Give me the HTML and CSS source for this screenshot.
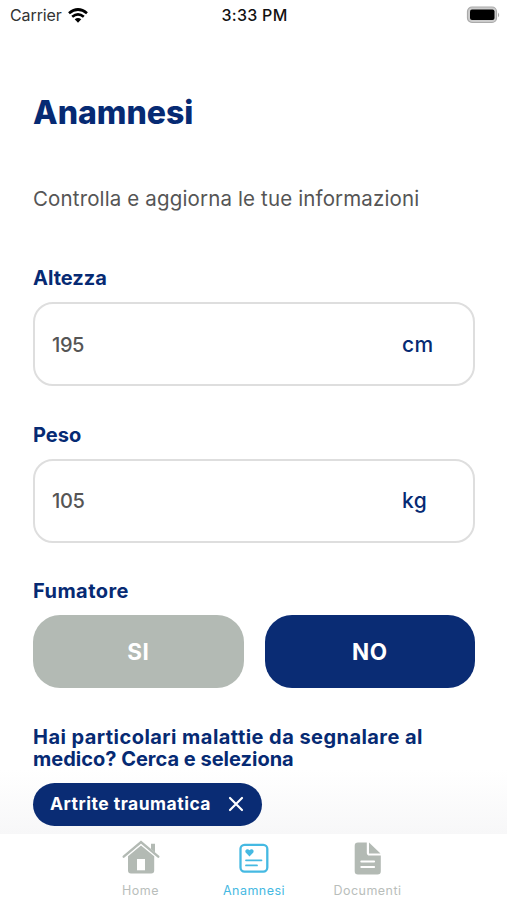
FILE: index.html
```html
<!DOCTYPE html>
<html lang="it">
<head>
<meta charset="utf-8">
<title>Anamnesi</title>
<link rel="stylesheet" href="styles.css">
</head>
<body>
<div class="screen">
  <header class="status">
    <div class="carrier"><span>Carrier</span>
      <svg width="20" height="15" viewBox="0 0 20 15" fill="none" stroke="#000" stroke-width="2.7"><path d="M1 5.2Q10-2.2 19 5.2M4.2 8.7q5.8-4.7 11.6 0"/><path d="M6.7 11.3q3.3-2.7 6.6 0L10 14.8z" fill="#000" stroke="none"/></svg>
    </div>
    <time class="clock">3:33 PM</time>
    <svg class="battery" width="34" height="18" viewBox="0 0 34 18"><rect x="1.5" y="1" width="29" height="15.5" rx="4.5" fill="#ccc" stroke="#aaa" stroke-width="1.2"/><rect x="4" y="3.6" width="24.5" height="10.4" rx="2"/><path d="M32 6.5q2.4 2.4 0 4.8z" fill="#aaa"/></svg>
  </header>
  <main class="content">
    <h1>Anamnesi</h1>
    <p class="intro">Controlla e aggiorna le tue informazioni</p>
    <section class="group">
      <h2>Altezza</h2>
      <div class="field"><span class="value">195</span><span class="unit">cm</span></div>
    </section>
    <section class="group">
      <h2>Peso</h2>
      <div class="field"><span class="value">105</span><span class="unit">kg</span></div>
    </section>
    <section class="smoker">
      <h2 class="wide">Fumatore</h2>
      <div class="choices"><button class="choice">SI</button><button class="choice selected">NO</button></div>
    </section>
    <section class="illness">
      <h2><span class="wide">Hai particolari malattie da segnalare al</span><br>medico? Cerca e seleziona</h2>
      <div class="tag"><span>Artrite traumatica</span>
        <svg width="16" height="16" viewBox="0 0 16 16" stroke="#fff" stroke-width="2.2" stroke-linecap="round"><path d="M2 2l12 12M14 2L2 14"/></svg>
      </div>
    </section>
  </main>
  <nav class="tabs">
    <a class="tab">
      <svg width="38" height="36" viewBox="0 0 38 36"><path d="M1.7 16.7L19 2.1l17.3 14.6" fill="none" stroke="#b3bab4" stroke-width="2.4" stroke-linecap="round"/><path d="M29 3.8h4v8.7l-4-3.4zM6 16.3L19 5.6l13.2 10.7v14.2q0 3-3 3H9q-3 0-3-3z" fill="#b3bab4"/><path d="M15 19h8v11.3h-8z" fill="#fff"/></svg>
      <span>Home</span>
    </a>
    <a class="tab active">
      <svg width="38" height="36" viewBox="0 0 38 36" fill="none" stroke="#45b9e2" stroke-width="2.3" stroke-linecap="round"><rect x="5.5" y="4.8" width="26.8" height="26.8" rx="4"/><path d="M11 20.3h15.5M11 25.4h11" stroke-width="1.8"/><path d="M14.5 16.5l-3.6-3.7c-2-2.8 1.8-5 3.6-2.6 1.8-2.4 5.6-.2 3.6 2.6z" fill="#45b9e2" stroke="none"/></svg>
      <span>Anamnesi</span>
    </a>
    <a class="tab">
      <svg width="38" height="36" viewBox="0 0 38 36"><path d="M9 2.5h8.8v10.2q0 2.8 2.8 2.8h11.2v15.7q0 3.3-3.3 3.3H9q-3.3 0-3.3-3.3V5.8q0-3.3 3.3-3.3zM20 2.5l11.5 11H20z" fill="#b3bab4"/><path d="M12.3 21.5h12.8M12.3 27h12.8" stroke="#fff" stroke-width="2" stroke-linecap="round"/></svg>
      <span>Documenti</span>
    </a>
  </nav>
</div>
</body>
</html>
```
FILE: styles.css
```css
* { box-sizing: border-box; }
body { margin: 0; background: #fff; font-family: Inter, "Liberation Sans", sans-serif; }
h1, h2, p { margin: 0; }
svg { display: block; flex: none; }
.screen { width: 507px; height: 900px; overflow: hidden; display: flex; flex-direction: column; }
.status { height: 30px; display: grid; grid-template-columns: 1fr auto 1fr; align-items: center; padding: 0 7px 0 10px; }
.carrier { display: flex; align-items: center; gap: 6px; font-size: 16px; color: #333; }
.carrier span { letter-spacing: -.1px; }
.clock { font-size: 16px; font-weight: 500; letter-spacing: .3px; color: #111; margin-left: -1px; }
.battery { justify-self: end; margin-top: -1px; }
.content { height: 804px; flex: none; padding: 62px 32px 0 33px; color: #062a73; background: linear-gradient(#fff 0 740px, #f7f7f8 804px); }
h1 { height: 40px; line-height: 42px; font-size: 32px; font-weight: 800; }
.intro { margin-top: 55px; height: 24px; line-height: 24px; font-size: 20.5px; font-weight: 430; letter-spacing: .14px; color: #555; white-space: nowrap; }
h2 { font-size: 20px; line-height: 24px; font-weight: 750; white-space: nowrap; }
.wide { letter-spacing: .45px; }
.group { height: 156.5px; }
.intro + .group { margin-top: 55px; }
.field { margin-top: 12px; height: 84px; border: 2px solid #dedede; border-radius: 20px; display: grid; grid-template-columns: 1fr 71px; align-items: center; padding: 1px 0 0 17px; }
.value { font-size: 20px; font-weight: 450; letter-spacing: -.4px; color: #555; }
.unit { font-size: 21px; font-weight: 450; letter-spacing: .4px; margin-top: -1px; }
.choices { margin-top: 12px; display: grid; grid-template-columns: 1fr 1fr; gap: 21px; }
.choice { height: 73px; border: 0; border-radius: 27px; background: #b3bab4; color: #fff; font: 750 22.5px/28px Inter, sans-serif; letter-spacing: .6px; padding: 0; }
.choice.selected { background: #0a2c74; }
.illness { margin-top: 37.5px; }
.illness h2 { line-height: 22px; }
.tag { margin-top: 13px; width: 229px; height: 43px; border-radius: 22px; background: #0a2c74; color: #fff; display: flex; align-items: center; justify-content: space-between; padding: 0 18px 0 17px; font-size: 17.5px; letter-spacing: .5px; font-weight: 750; white-space: nowrap; }
.tag span { margin-top: -1px; }
.tabs { height: 66px; flex: none; background: #fff; display: grid; grid-template-columns: repeat(3, 113.5px); justify-content: center; padding: 6px 0 0 1px; }
.tab { display: flex; flex-direction: column; align-items: center; font-size: 12.5px; letter-spacing: .45px; line-height: 16px; color: #b9bebb; }
.tab span { margin-top: 7px; }
.tab.active { color: #45b9e2; }
```
